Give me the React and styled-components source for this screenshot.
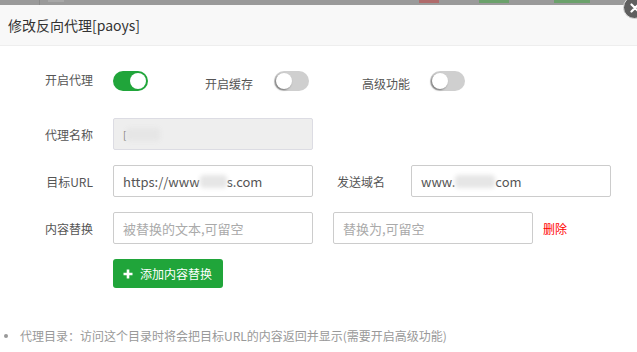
import React from 'react'
import styled, { createGlobalStyle } from 'styled-components'

const Global = createGlobalStyle`
  html, body {
    margin: 0;
    padding: 0;
    background: #fff;
  }
  * { box-sizing: border-box; }
`;

const Page = styled.div`
  position: relative;
  width: 637px;
  height: 352px;
  overflow: hidden;
  background: #fff;
  font-family: "Noto Sans CJK SC", "Microsoft YaHei", sans-serif;
  color: #555;
`;

// grey overlay strip of the page behind the dialog
const Backdrop = styled.div`
  height: 5px;
  background: #9a9a9a;
  display: flex;
  align-items: flex-start;
`;

const BackBit = styled.span`
  display: block;
  margin-left: ${p => p.$left}px;
  width: ${p => p.$w}px;
  height: ${p => p.$h || 3}px;
  background: ${p => p.$c};
  opacity: 0.45;
`;

const Header = styled.div`
  height: 41px;
  padding-left: 8px;
  display: flex;
  align-items: center;
  background: #f8f8f8;
  border-bottom: 1px solid #eee;
  font-size: 14px;
  color: #333;
`;

const Close = styled.div`
  position: absolute;
  top: -4px;
  right: -9px;
  width: 23px;
  height: 23px;
  border-radius: 50%;
  background: #5f5f5f;
  border: 1px solid #ddd;
  display: flex;
  align-items: center;
  justify-content: center;
`;

const Body = styled.div`
  padding-top: 25px;
  display: flex;
  flex-direction: column;
  gap: 15px;
`;

const Row = styled.div`
  display: flex;
  align-items: center;
  height: ${p => p.$h || 32}px;
  margin-bottom: ${p => p.$mb || 0}px;
`;

const Label = styled.span`
  flex: none;
  width: ${p => p.$w ? p.$w + 'px' : 'auto'};
  text-align: right;
  font-size: 12px;
  color: #555;
  margin-left: ${p => p.$ml || 0}px;
  margin-right: ${p => p.$mr || 20}px;
  transform: translateY(${p => p.$dy || 0}px);
`;

const Switch = styled.span`
  position: relative;
  flex: none;
  width: 35px;
  height: 20px;
  border-radius: 10px;
  background: ${p => p.$on ? '#20a53a' : '#cfcfcf'};
  &::after {
    content: '';
    position: absolute;
    top: 2px;
    left: ${p => p.$on ? '17px' : '2px'};
    width: 16px;
    height: 16px;
    border-radius: 50%;
    background: #fff;
    box-shadow: ${p => p.$on ? 'none' : '-1px 1px 2px rgba(0,0,0,0.45)'};
  }
`;

const Field = styled.div`
  flex: none;
  width: 200px;
  height: 32px;
  padding: 0 9px;
  display: flex;
  align-items: center;
  border: 1px solid ${p => p.$disabled ? '#dcdce3' : '#ccc'};
  border-radius: 2px;
  background: ${p => p.$disabled ? '#eee' : '#fff'};
  font-size: 13px;
  color: #555;
  margin-left: ${p => p.$ml || 0}px;
  white-space: nowrap;
`;

const Input = styled.input`
  flex: none;
  width: 200px;
  height: 32px;
  padding: 0 9px;
  border: 1px solid #ccc;
  border-radius: 2px;
  background: #fff;
  font-family: inherit;
  font-size: 13px;
  color: #555;
  outline: none;
  margin-left: ${p => p.$ml || 0}px;
  &::placeholder { color: #aaa; }
`;

const Blur = styled.span`
  display: inline-block;
  width: ${p => p.$w}px;
  height: 13px;
  background: #e6e6e6;
  filter: blur(2px);
  border-radius: 4px;
`;

const Delete = styled.span`
  margin-left: 10px;
  font-size: 12px;
  color: #f00;
`;

const AddButton = styled.button`
  margin-left: 113px;
  height: 29px;
  width: 110px;
  padding: 0 0 0 10px;
  border: none;
  border-radius: 3px;
  background: #20a53a;
  color: #fff;
  font-family: inherit;
  font-size: 12px;
  display: flex;
  align-items: center;
  gap: 7px;
`;

const Tips = styled.ul`
  margin: 39px 0 0;
  padding: 0 0 0 4px;
  list-style: none;
`;

const Tip = styled.li`
  display: flex;
  align-items: center;
  font-size: 12px;
  color: #999;
  &::before {
    content: '';
    width: 4px;
    height: 4px;
    border-radius: 50%;
    background: #999;
    margin-right: 12px;
  }
`;

export default function App() {
  return (
    <Page>
      <Global />
      <Backdrop>
        <BackBit $left={39} $w={1} $h={5} $c="#777" />
        <BackBit $left={8} $w={16} $h={2} $c="#bbb" />
        <BackBit $left={355} $w={20} $c="#c33" />
        <BackBit $left={40} $w={30} $c="#3a3" />
        <BackBit $left={45} $w={36} $c="#3a3" />
      </Backdrop>
      <Header>修改反向代理[paoys]</Header>
      <Close>
        <svg width="10" height="10" viewBox="0 0 10 10">
          <path d="M1.5 1.5 L8.5 8.5 M8.5 1.5 L1.5 8.5" stroke="#fff" strokeWidth="2.2" strokeLinecap="round" />
        </svg>
      </Close>
      <Body>
        <Row $h={20} $mb={12}>
          <Label $w={93} $dy={-2}>开启代理</Label>
          <Switch $on />
          <Label $ml={57} $mr={21} $dy={2}>开启缓存</Label>
          <Switch />
          <Label $ml={53} $mr={20} $dy={2}>高级功能</Label>
          <Switch />
        </Row>
        <Row>
          <Label $w={93}>代理名称</Label>
          <Field $disabled>
            <span style={{ fontSize: 10, color: '#666' }}>[</span>
            <Blur $w={34} />
          </Field>
        </Row>
        <Row>
          <Label $w={93}>目标URL</Label>
          <Field>
            https://www<Blur $w={27} />s.com
          </Field>
          <Label $ml={24} $mr={26}>发送域名</Label>
          <Field>
            www.<Blur $w={40} />com
          </Field>
        </Row>
        <Row>
          <Label $w={93}>内容替换</Label>
          <Input placeholder="被替换的文本,可留空" />
          <Input $ml={20} placeholder="替换为,可留空" />
          <Delete>删除</Delete>
        </Row>
        <AddButton>
          <svg width="10" height="10" viewBox="0 0 10 10">
            <path d="M5 0.5 V9.5 M0.5 5 H9.5" stroke="#fff" strokeWidth="2.6" />
          </svg>
          添加内容替换
        </AddButton>
      </Body>
      <Tips>
        <Tip>代理目录：访问这个目录时将会把目标URL的内容返回并显示(需要开启高级功能)</Tip>
      </Tips>
    </Page>
  )
}
